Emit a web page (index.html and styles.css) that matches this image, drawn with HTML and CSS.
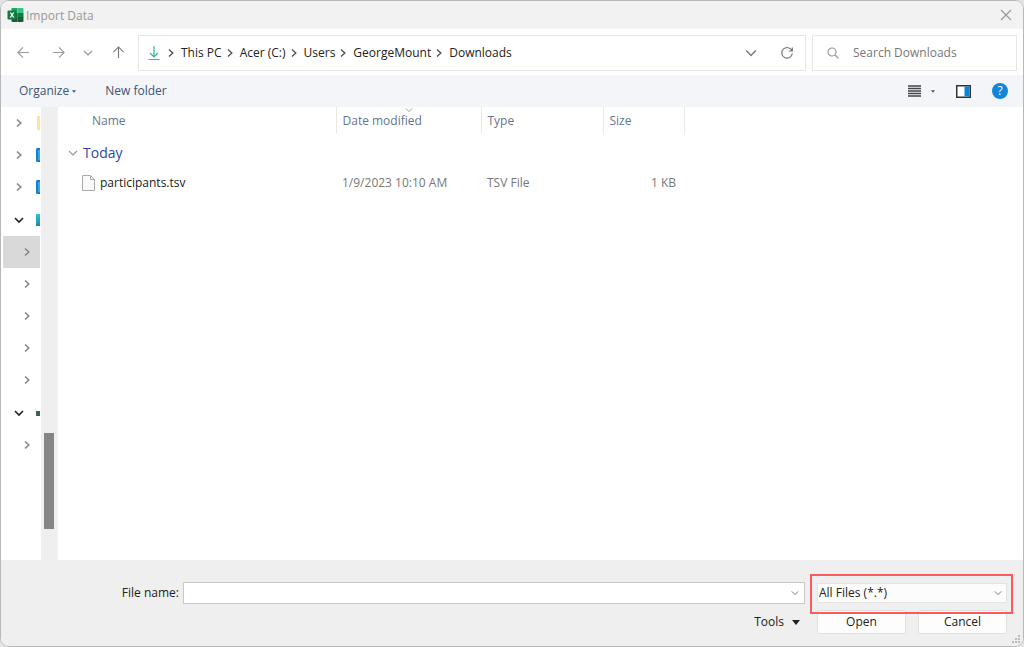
FILE: index.html
```
<!DOCTYPE html>
<html lang="en">
<head>
<meta charset="utf-8">
<title>Import Data</title>
<link rel="stylesheet" href="styles.css">
</head>
<body>
<svg class="symbols" aria-hidden="true">
  <symbol id="right" viewBox="0 0 10 10"><path d="M3 1.500L6.800 5L3 8.500"/></symbol>
  <symbol id="down" viewBox="0 0 10 10"><path d="M1 3L5 7L9 3"/></symbol>
</svg>
<main class="dialog">
  <header class="titlebar">
    <svg class="app-icon" viewBox="0 0 16 16" aria-hidden="true">
      <path fill="#21a366" d="M4 1h6v5H4z"/><path fill="#33c481" d="M10 1h5q1 0 1 1v4h-6z"/>
      <path fill="#185c37" d="M4 6h6v9H5q-1 0-1-1z"/><path fill="#107c41" d="M10 6h6v4h-6z"/>
      <path fill="#185c37" d="M10 10h6v4q0 1-1 1h-5z"/>
      <rect y="3.500" width="9" height="9" rx="1" fill="#107c41"/>
      <path d="M2.800 5.500l3.400 5M6.200 5.500l-3.400 5" stroke="#fff" stroke-width="1.300"/>
    </svg>
    <h1 class="title">Import Data</h1>
    <button class="icon-button close" aria-label="Close"><svg class="icon faint" viewBox="0 0 12 12"><path d="M1 1l10 10M11 1L1 11"/></svg></button>
  </header>

  <nav class="navigation" aria-label="Location">
    <div class="history">
      <button class="icon-button" aria-label="Back"><svg class="icon arrow faint" viewBox="0 0 14 14"><path d="M13 7H1M6.500 1.500L1 7l5.500 5.500"/></svg></button>
      <button class="icon-button" aria-label="Forward"><svg class="icon arrow faint" viewBox="0 0 14 14"><path d="M1 7h12M7.500 1.500L13 7l-5.500 5.500"/></svg></button>
      <button class="icon-button" aria-label="Recent locations"><svg class="icon small faint"><use href="#down"/></svg></button>
      <button class="icon-button" aria-label="Up"><svg class="icon arrow" viewBox="0 0 14 14"><path d="M7 13V1M1.500 6.500L7 1l5.500 5.500"/></svg></button>
    </div>
    <div class="address">
      <svg class="download" viewBox="0 0 12 16" aria-hidden="true"><path d="M6 1v11M2 8l4 4 4-4M.5 14.500h11"/></svg>
      <ol class="crumbs">
        <li class="crumb"><svg class="icon small strong"><use href="#right"/></svg><a class="crumb-link" href="#pc">This PC</a></li>
        <li class="crumb"><svg class="icon small strong"><use href="#right"/></svg><a class="crumb-link" href="#c">Acer (C:)</a></li>
        <li class="crumb"><svg class="icon small strong"><use href="#right"/></svg><a class="crumb-link" href="#users">Users</a></li>
        <li class="crumb"><svg class="icon small strong"><use href="#right"/></svg><a class="crumb-link" href="#home">GeorgeMount</a></li>
        <li class="crumb"><svg class="icon small strong"><use href="#right"/></svg><a class="crumb-link" href="#downloads">Downloads</a></li>
      </ol>
      <button class="icon-button" aria-label="Previous locations"><svg class="icon medium"><use href="#down"/></svg></button>
      <button class="icon-button" aria-label="Refresh"><svg class="icon medium" viewBox="0 0 12 12"><path d="M11 4A5.300 5.300 0 1 0 11.300 6.500M11.300.5V4H7.800"/></svg></button>
    </div>
    <label class="search">
      <svg class="icon medium faint" viewBox="0 0 12 12" aria-hidden="true"><circle cx="5" cy="5" r="4"/><path d="M8 8l3.500 3.500"/></svg>
      <input class="search-input" type="search" placeholder="Search Downloads" aria-label="Search Downloads">
    </label>
  </nav>

  <div class="toolbar">
    <button class="text-button">Organize <svg class="caret" viewBox="0 0 6 4"><path d="M0 0h6L3 4z"/></svg></button>
    <button class="text-button">New folder</button>
    <div class="view-tools">
      <button class="view-button" aria-label="Change view">
        <svg class="list-icon" viewBox="0 0 13 12"><path d="M0 1h13M0 3.500h13M0 6h13M0 8.500h13M0 11h13"/></svg>
        <svg class="caret" viewBox="0 0 6 4"><path d="M0 0h6L3 4z"/></svg>
      </button>
      <button class="view-button" aria-label="Preview pane">
        <svg class="pane-icon" viewBox="0 0 15 13"><path fill="#fff" stroke="#333" d="M.75.75h13.500v11.500H.75z" stroke-width="1.500"/><path fill="#0a84d8" d="M8.500 1.500h5v10h-5z"/></svg>
      </button>
      <button class="help" aria-label="Help">?</button>
    </div>
  </div>

  <div class="browser">
    <aside class="tree" aria-label="Folders">
      <div class="group">
        <button class="node" aria-label="Expand folder"><svg class="icon small"><use href="#right"/></svg><span class="sliver folder"></span></button>
        <button class="node" aria-label="Expand cloud folder"><svg class="icon small"><use href="#right"/></svg><span class="sliver cloud"></span></button>
        <button class="node" aria-label="Expand cloud folder"><svg class="icon small"><use href="#right"/></svg><span class="sliver cloud"></span></button>
      </div>
      <div class="group">
        <button class="node" aria-label="Collapse This PC"><svg class="icon small open"><use href="#down"/></svg><span class="sliver computer"></span></button>
        <button class="node child selected" aria-label="Expand drive"><svg class="icon small"><use href="#right"/></svg></button>
        <button class="node child" aria-label="Expand drive"><svg class="icon small"><use href="#right"/></svg></button>
        <button class="node child" aria-label="Expand drive"><svg class="icon small"><use href="#right"/></svg></button>
        <button class="node child" aria-label="Expand drive"><svg class="icon small"><use href="#right"/></svg></button>
        <button class="node child" aria-label="Expand drive"><svg class="icon small"><use href="#right"/></svg></button>
      </div>
      <div class="group">
        <button class="node" aria-label="Collapse drive"><svg class="icon small open"><use href="#down"/></svg><span class="sliver drive"></span></button>
        <button class="node child" aria-label="Expand folder"><svg class="icon small"><use href="#right"/></svg></button>
      </div>
    </aside>
    <div class="track"><div class="before"></div><div class="thumb"></div><div class="after"></div></div>
    <section class="files">
      <table class="table">
        <colgroup><col class="col-name"><col class="col-date"><col class="col-type"><col class="col-size"></colgroup>
        <thead>
          <tr class="head-row"><th class="head first">Name</th><th class="head sorted">Date modified<svg class="sort"><use href="#down"/></svg></th><th class="head">Type</th><th class="head">Size</th></tr>
        </thead>
        <tbody>
          <tr class="group-row"><th class="group-cell" colspan="4"><div class="group-title"><svg class="icon small faint"><use href="#down"/></svg>Today</div></th></tr>
          <tr class="file-row">
            <td class="cell name"><div class="file"><svg class="file-icon" viewBox="0 0 13 16"><path d="M.5.500h8l4 4v11H.5zM8.500.500v4h4"/></svg>participants.tsv</div></td>
            <td class="cell">1/9/2023 10:10 AM</td><td class="cell">TSV File</td><td class="cell size">1 KB</td>
          </tr>
        </tbody>
      </table>
    </section>
  </div>

  <footer class="footer">
    <label class="name-label" for="filename">File name:</label>
    <div class="combo">
      <input class="name-input" id="filename" type="text">
      <button class="combo-button" aria-label="Show file names"><svg class="icon small"><use href="#down"/></svg></button>
    </div>
    <div class="type">
      <select class="type-select" aria-label="File type"><option>All Files (*.*)</option></select>
      <svg class="icon small type-arrow"><use href="#down"/></svg>
      <div class="highlight"></div>
    </div>
    <button class="tools">Tools <svg class="tools-caret" viewBox="0 0 8 5"><path d="M0 0h8L4 5z"/></svg></button>
    <div class="actions"><button class="action">Open</button><button class="action">Cancel</button></div>
    <svg class="grip" viewBox="0 0 9 9" aria-hidden="true"><path d="M6 0h2v2H6zM3 3h2v2H3zM6 3h2v2H6zM0 6h2v2H0zM3 6h2v2H3zM6 6h2v2H6z"/></svg>
  </footer>
</main>
</body>
</html>
```
FILE: styles.css
```
* { box-sizing: border-box; }
body { margin: 0; background: #e4e4e4; color: #222; font: 12px/16px "Open Sans", "Noto Sans", sans-serif; }
button, input, select { font: inherit; color: inherit; }
button { border: 0; padding: 0; background: none; }
.symbols { position: absolute; width: 0; height: 0; }
.dialog { display: flex; flex-direction: column; height: 100vh; overflow: hidden; border: 1px solid #b8b8b8; border-radius: 9px; background: #fff; }

.icon { display: block; flex: none; width: 12px; height: 12px; fill: none; stroke: #777; stroke-width: 1.2; overflow: visible; }
.small { width: 10px; height: 10px; }
.medium { width: 12px; height: 12px; }
.arrow { width: 13px; height: 13px; }
.faint { stroke: #999; }
.strong { stroke: #555; stroke-width: 1.4; }
.node .icon { stroke: #888; stroke-width: 1.6; }
.node .open { stroke: #222; }
.icon-button { display: grid; place-items: center; flex: none; width: 36px; height: 28px; }

.titlebar { display: flex; align-items: center; flex: none; height: 28px; padding-left: 6px; background: #f2f2f2; color: #999; }
.close { width: 34px; }
.app-icon { width: 17px; height: 16px; }
.title { flex: 1; margin: 0 0 0 2px; padding-top: 1px; font-size: 12px; line-height: 16px; font-weight: 400; }

.navigation { display: flex; align-items: center; flex: none; height: 46px; gap: 6px; padding: 1px 6px 0 0; }
.history { display: grid; grid-template-columns: 36px 34px 26px 35px; justify-items: center; margin-left: 4px; margin-right: -4px; }
.history .icon-button { width: 30px; }
.address { display: flex; align-items: center; flex: 1; height: 36px; padding-left: 9px; border: 1px solid #e6e6e6; }
.download { width: 12px; height: 16px; fill: none; stroke: #2db9a3; stroke-width: 1.2; }
.crumbs { display: flex; flex: 1; margin: 0; padding: 0 0 0 6px; list-style: none; }
.crumb { display: flex; align-items: center; gap: 5px; margin-right: 3px; }
.crumb-link { color: #222; text-decoration: none; }
.search { display: flex; align-items: center; flex: 0 0 205px; min-width: 0; height: 36px; gap: 14px; padding-left: 14px; border: 1px solid #e6e6e6; }
.search-input { min-width: 0; width: 100px; flex: 1; padding: 0; border: 0; outline: 0; background: none; }
.search-input::placeholder { color: #777; opacity: 1; }

.toolbar { display: flex; align-items: center; flex: none; height: 32px; gap: 29px; padding: 0 15px 0 18px; background: #f3f5f8; color: #405375; }
.text-button { display: flex; align-items: center; gap: 3px; }
.caret { width: 4px; height: 3px; fill: #405375; }
.view-tools { display: flex; align-items: center; margin-left: auto; gap: 21px; }
.view-button { display: flex; align-items: center; gap: 10px; }
.list-icon { width: 13px; height: 12px; stroke: #444; stroke-width: 1.4; }
.pane-icon { width: 15px; height: 13px; }
.help { width: 16px; height: 16px; border-radius: 50%; background: #0f86dc; color: #fff; font-size: 12px; line-height: 16px; }

.browser { display: flex; flex: 1; min-height: 0; }
.tree { display: flex; flex-direction: column; flex: 0 0 40px; gap: 1px; padding: 0 1px 0 2px; overflow: hidden; }
.node { display: flex; align-items: center; justify-content: space-between; width: 100%; height: 32px; padding-left: 11px; }
.child { padding-left: 19px; }
.selected { background: #d9d9d9; }
.sliver { width: 4px; height: 14px; }
.folder { width: 3px; background: #ffe49a; }
.cloud { border: 2px solid #147fce; border-right: 0; border-radius: 2px 0 0 2px; background: #35a5e8; }
.computer { height: 12px; background: linear-gradient(#2bc4d2, #2586a7); }
.drive { height: 5px; background: #3e6450; }
.track { display: flex; flex-direction: column; align-items: center; flex: 0 0 16px; background: #efefef; }
.before { flex: 326; }
.thumb { flex: 96; width: 10px; background: #858585; }
.after { flex: 31; }
.files { flex: 1; min-width: 0; border-left: 1px solid #f3f3f3; }
.table { width: 626px; border-collapse: collapse; table-layout: fixed; text-align: left; }
.col-name { width: 278px; }
.col-date { width: 145px; }
.col-type { width: 122px; }
.col-size { width: 81px; }
.head-row { height: 27px; }
.head { padding: 0 6px; border-right: 1px solid #e9e9e9; color: #65758f; font-weight: 400; }
.first { padding-left: 34px; }
.sorted { position: relative; }
.sort { position: absolute; top: -1px; left: 68px; width: 8px; height: 8px; fill: none; stroke: #888; }
.group-row { height: 37px; }
.group-cell { padding: 0 0 0 10px; color: #3347a0; font-size: 14px; font-weight: 400; }
.group-title { display: flex; align-items: center; gap: 5px; }
.file-row { height: 24px; }
.cell { padding: 0 6px; color: #777; }
.name { padding-left: 24px; color: #222; }
.file { display: flex; align-items: center; gap: 5px; }
.file-icon { width: 13px; height: 16px; fill: #fafafa; stroke: #aaa; }
.size { padding-right: 8px; text-align: right; }

.footer { position: relative; display: grid; grid-template-columns: 178px 1fr 190px; grid-template-rows: 22px 24px; align-items: center; gap: 6px 12px; flex: none; height: 86px; padding: 22px 16px 12px 0; background: #efefef; }
.name-label { text-align: right; }
.combo { display: flex; height: 22px; margin-left: -8px; border: 1px solid #c8c8c8; background: #fff; }
.name-input { flex: 1; min-width: 0; padding: 0 4px; border: 0; outline: 0; background: none; }
.combo-button { display: grid; place-items: center; width: 18px; }
.combo-button .icon, .type-arrow { width: 8px; height: 8px; }
.type { position: relative; height: 20px; }
.type-select { width: 100%; height: 20px; padding: 0 1px; border: 1px solid #e2e2e2; border-radius: 0; appearance: none; background: #fcfcfc; line-height: 18px; }
.type-arrow { position: absolute; top: 6px; right: 5px; pointer-events: none; }
.highlight { position: absolute; z-index: 1; inset: -9px -6px -11px -7px; border: 2px solid #f85c5c; pointer-events: none; }
.tools { display: flex; align-items: center; grid-column: 2; justify-self: end; gap: 8px; margin-right: 5px; }
.tools-caret { width: 8px; height: 5px; fill: #222; }
.actions { display: grid; grid-template-columns: 1fr 1fr; gap: 12px; }
.action { height: 24px; border: 1px solid #e0e0e0; border-radius: 2px; background: #fdfdfd; }
.grip { position: absolute; right: 2px; bottom: 2px; width: 9px; height: 9px; fill: #bbb; }
```
